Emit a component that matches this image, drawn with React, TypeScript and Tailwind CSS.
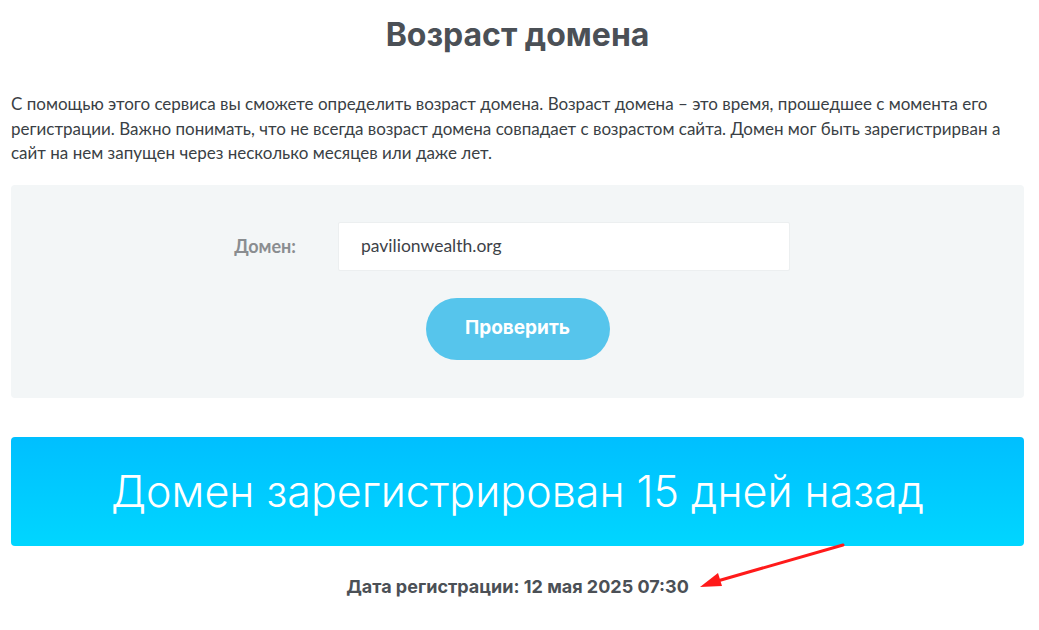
export default function App() {
  return (
    <div className="relative min-h-[630px] bg-white pl-[11px] pr-[15px] font-['Lato','Noto_Sans',sans-serif] text-[#3d4248]">
      <h1 className="pt-[15px] text-center font-['Inter',sans-serif] text-[32px] font-bold leading-[40px] text-[#4b5056]">
        Возраст домена
      </h1>

      <p className="mt-[37px] text-[17px] leading-[24.5px] text-[#3a3f45]">
        С помощью этого сервиса вы сможете определить возраст домена. Возраст домена – это время, прошедшее с момента его
        регистрации. Важно понимать, что не всегда возраст домена совпадает с возрастом сайта. Домен мог быть зарегистрирван а
        сайт на нем запущен через несколько месяцев или даже лет.
      </p>

      <div className="mt-[19px] flex h-[213px] flex-col rounded-[4px] bg-[#f3f6f7] pt-[37px]">
        <div className="flex items-center">
          <label className="w-[285px] text-right text-[18px] font-bold text-[#8a8d90]">Домен:</label>
          <div className="ml-[42px] flex h-[49px] w-[452px] items-center rounded-[2px] border border-[#eceff0] bg-white px-[22px] text-[17.5px] text-[#3d4248]">
            pavilionwealth.org
          </div>
        </div>
        <button className="mx-auto mt-[27px] h-[62px] w-[184px] rounded-full bg-[#56c5ec] font-['Inter',sans-serif] text-[19px] font-bold text-white">
          Проверить
        </button>
      </div>

      <div className="mt-[39px] flex h-[109px] items-center justify-center rounded-[4px] bg-gradient-to-b from-[#00bfff] to-[#00d6ff]">
        <span className="font-['Inter',sans-serif] text-[43px] font-light text-white">
          Домен зарегистрирован 15 дней назад
        </span>
      </div>

      <p className="mt-[27px] text-center font-['Inter',sans-serif] text-[18px] font-bold text-[#4b5056]">
        Дата регистрации: 12 мая 2025 07:30
      </p>

      <svg className="absolute left-[696px] top-[540px]" width="152" height="52" viewBox="0 0 152 52">
        <line x1="147" y1="5" x2="18" y2="42" stroke="#ff1a1a" strokeWidth="3" strokeLinecap="round" />
        <polygon points="4,47 22,33 26,46" fill="#ff1a1a" />
      </svg>
    </div>
  )
}
